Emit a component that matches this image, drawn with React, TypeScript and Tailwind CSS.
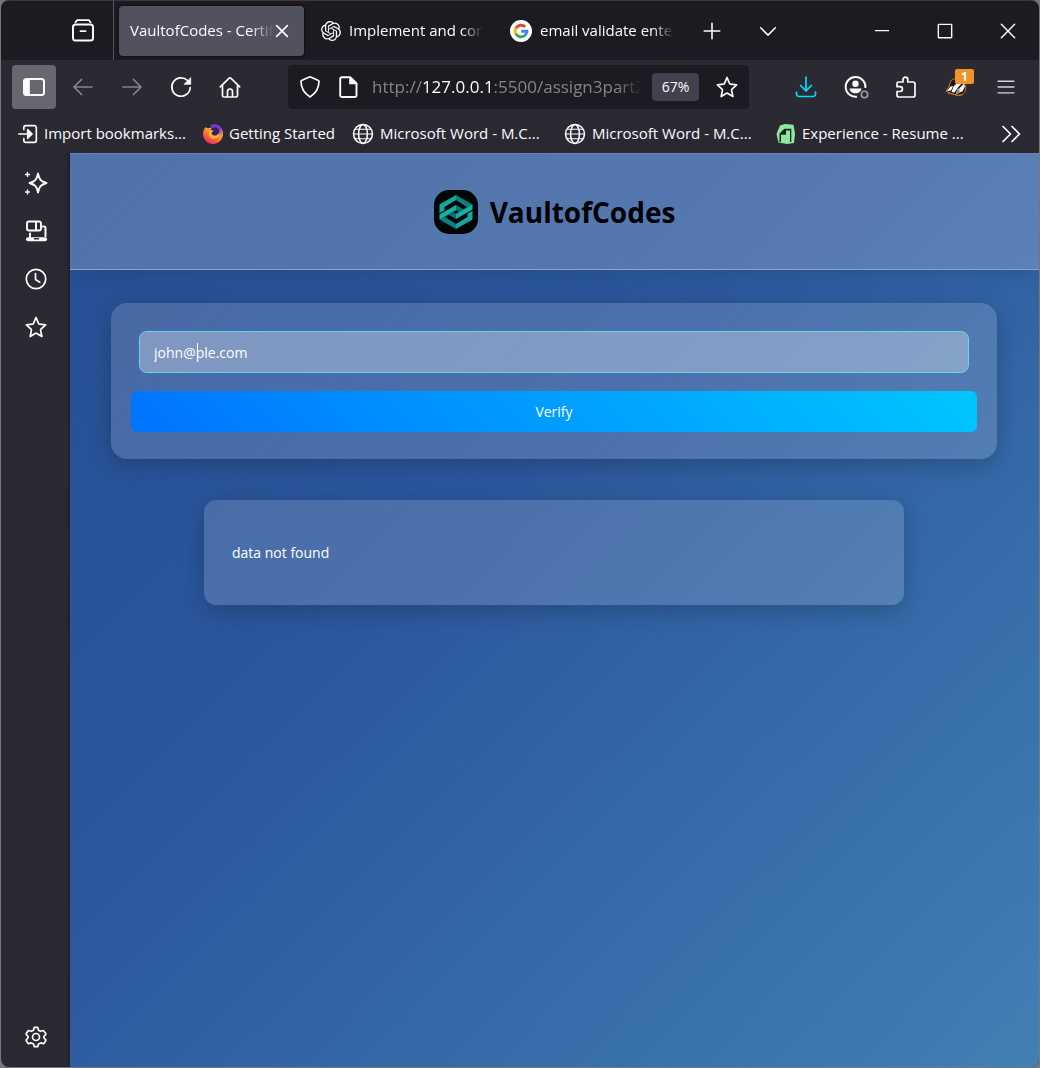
import type { ReactNode } from "react";
import { SiOpenai } from "react-icons/si";

type IconProps = { children: ReactNode; className?: string; size?: number };

function Icon({ children, className = "", size = 24 }: IconProps) {
  return (
    <svg
      width={size}
      height={size}
      viewBox="0 0 24 24"
      fill="none"
      stroke="currentColor"
      strokeWidth="1.7"
      strokeLinecap="round"
      strokeLinejoin="round"
      className={`shrink-0 ${className}`}
      aria-hidden="true"
    >
      {children}
    </svg>
  );
}

const starPath =
  "M12 2.5 14.5 8.4a1.4 1.4 0 0 0 1.1.8l6 .6-4.6 4.3a1.4 1.4 0 0 0-.4 1.3l1.3 6.1-5-3a1.6 1.6 0 0 0-1.7 0l-5 3 1.2-6.1a1.4 1.4 0 0 0-.4-1.3L2.4 9.8l6-.6a1.4 1.4 0 0 0 1.1-.8Z";

function ArchiveIcon() {
  return (
    <Icon>
      <path d="M4.5 3.2 6 1.2h12l1.5 2" strokeWidth="1.8" />
      <rect x="2" y="5.6" width="20" height="16" rx="2.5" strokeWidth="2" />
      <path d="M9.5 12.2h5" strokeWidth="1.8" />
    </Icon>
  );
}

function GoogleIcon() {
  return (
    <svg width="22" height="22" viewBox="0 0 22 22" className="shrink-0" aria-hidden="true">
      <circle cx="11" cy="11" r="11" fill="#fff" />
      <g fill="none" strokeWidth="2.9">
        <path d="M5.9 8.2A5.9 5.9 0 0 1 15.2 6.9" stroke="#ea4335" />
        <path d="M5.9 13.9A5.9 5.9 0 0 1 5.9 8.1" stroke="#fbbc04" />
        <path d="M14.8 15.5A5.9 5.9 0 0 1 5.9 13.9" stroke="#34a853" />
        <path d="M11.2 11.3h5.7A5.9 5.9 0 0 1 14.7 15.6" stroke="#4285f4" />
      </g>
    </svg>
  );
}

function FirefoxIcon() {
  return (
    <svg width="20" height="20" viewBox="0 0 20 20" className="shrink-0" aria-hidden="true">
      <defs>
        <linearGradient id="ff-body" x1="0.75" y1="0.1" x2="0.2" y2="0.95">
          <stop offset="0" stopColor="#ffd43a" />
          <stop offset="0.5" stopColor="#ff7a2c" />
          <stop offset="1" stopColor="#f52469" />
        </linearGradient>
        <linearGradient id="ff-tail" x1="0" y1="0" x2="1" y2="1">
          <stop offset="0" stopColor="#6a3ff2" />
          <stop offset="0.55" stopColor="#8d2be0" />
          <stop offset="1" stopColor="#ffb02e" />
        </linearGradient>
      </defs>
      <path d="M2.5 3.2C.8 5 0 7.500.1 10.200.3 15.700 4.600 20 10 20s9.900-4.300 9.900-9.700c0-3-1.200-5.800-3.400-7.700L9 3.500 5 4.300Z" fill="url(#ff-body)" />
      <path d="M7 1.500C10.500-.6 15-.1 17.600 3c2.300 2.500 2.800 6 1.800 9l-4-1-2-6Z" fill="url(#ff-tail)" />
      <circle cx="11.600" cy="8.200" r="4.900" fill="#30255f" />
      <path d="M6.500 6.300c1.600-.6 2.800-.4 4 .4L8.600 8.700c0 2 2 3.300 4.300 2.700 1.600-.5 2.600-1.800 3.600-3.500.3 4-2.100 6.600-5.500 6.800C7 14.900 4.800 10.500 6.500 6.300Z" fill="#ffb13a" />
    </svg>
  );
}

function GlobeIcon() {
  return (
    <Icon size={22}>
      <circle cx="12" cy="12" r="10.3" />
      <ellipse cx="12" cy="12" rx="4.8" ry="10.3" />
      <path d="M1.7 12h20.6M3.5 6.8h17M3.5 17.2h17" strokeWidth="1.3" />
    </Icon>
  );
}

function ResumeIcon() {
  return (
    <svg width="20" height="20" viewBox="0 0 20 20" className="shrink-0" aria-hidden="true">
      <path d="M4 1.5 9 0l8.500.8 1.500 9-1 9.200-7 1-8.500-1.500L.5 10Z" fill="#8fe8a0" />
      <path d="M3.500 9.500 8.300 4.700H15.300V18H14V6.500h-4v4.300H5V18H3.500Z" fill="#17251d" />
      <path d="m5 9.500 3.500-3.500v3.500Z" fill="#17251d" />
    </svg>
  );
}

function BadgerIcon() {
  return (
    <svg width="22" height="20" viewBox="0 0 22 20" className="shrink-0" aria-hidden="true">
      <path d="M1 14.500 4 9.500l2-6 6-3 6 4 3 5-1 5-3 3.500-4 .5-5-1.500Z" fill="#16120f" stroke="#d9701f" strokeWidth="1" />
      <path d="M1.800 14.200 5.500 9.500 8 9l-2 4.500Z" fill="#fff" />
      <path d="M6.500 15 8.500 9.500 13 5l4 1-4.500 5-3 4.500Z" fill="#fff" />
      <path d="m13 16 1.500-5L19 6.500l1 3-2.500 5Z" fill="#f1ede8" />
      <path d="m10.500 17.500 1.500-5.500 2-1 .5 3-1 3Z" fill="#8b8b8f" />
      <path d="m3 16 6 1.500 4 1 4-1" stroke="#d9701f" fill="none" />
    </svg>
  );
}

function VaultLogo() {
  return (
    <svg viewBox="0 0 44 44" className="size-11 shrink-0" role="img" aria-label="VaultofCodes logo">
      <rect width="44" height="44" rx="15" fill="#020606" />
      {[0, 180].map((angle) => (
        <g key={angle} transform={`rotate(${angle} 22 22)`}>
          <path d="M5.500 14.500 22 5v5L10.500 17v3.300l-5 2.900Z" fill="#10a99f" />
          <path d="M22 5 38.500 14.500 33.500 17.400 22 10Z" fill="#0b827c" />
          <path d="M5.500 24.500 22 15v5.200L5.500 29.700Z" fill="#12b0a6" />
          <path d="M22 15 30 19.500 25.500 22 22 20.200Z" fill="#0a736f" />
        </g>
      ))}
    </svg>
  );
}

function NavButton({ label, children, className = "" }: { label: string; children: ReactNode; className?: string }) {
  return (
    <button type="button" aria-label={label} className={`flex size-11 shrink-0 items-center justify-center rounded ${className}`}>
      {children}
    </button>
  );
}

function TabStrip() {
  return (
    <div className="flex h-[59px] items-center bg-[#1c1b22]">
      <div className="flex h-full w-[113px] shrink-0 items-center justify-end border-r border-[#55545c] pr-2">
        <NavButton label="Recent browsing">
          <ArchiveIcon />
        </NavButton>
      </div>
      <div role="tablist" aria-label="Open tabs" className="flex items-center pl-[5px]">
        <div role="tab" aria-selected="true" className="flex h-[50px] w-[185px] items-center rounded bg-[#52525e] pl-[11px] shadow-[0_0_3px_#000]">
          <span className="w-36 overflow-hidden whitespace-nowrap [mask-image:linear-gradient(to_right,#000_84%,transparent)]">
            VaultofCodes - Certif
          </span>
          <button type="button" aria-label="Close tab">
            <Icon size={16}>
              <path d="m4 4 16 16M20 4 4 20" strokeWidth="2.5" />
            </Icon>
          </button>
        </div>
        <div role="tab" aria-selected="false" className="flex w-[189px] items-center gap-2 pl-[17px]">
          <SiOpenai size={20} className="shrink-0" aria-hidden="true" />
          <span className="w-[134px] overflow-hidden whitespace-nowrap [mask-image:linear-gradient(to_right,#000_84%,transparent)]">
            Implement and con
          </span>
        </div>
        <div role="tab" aria-selected="false" className="flex w-[197px] items-center gap-2 pl-[17px]">
          <GoogleIcon />
          <span className="w-[134px] overflow-hidden whitespace-nowrap [mask-image:linear-gradient(to_right,#000_84%,transparent)]">
            email validate ente
          </span>
        </div>
      </div>
      <NavButton label="New tab">
        <Icon size={22}>
          <path d="M12 3.5v17M3.500 12h17" />
        </Icon>
      </NavButton>
      <NavButton label="List all tabs" className="ml-3">
        <Icon size={22}>
          <path d="m4 8.500 8 8 8-8" />
        </Icon>
      </NavButton>
      <div className="ml-auto flex">
        <button type="button" aria-label="Minimize" className="flex h-11 w-[63px] items-center justify-center">
          <Icon size={20}>
            <path d="M3.500 11.500h17" strokeLinecap="butt" />
          </Icon>
        </button>
        <button type="button" aria-label="Maximize" className="flex h-11 w-[63px] items-center justify-center">
          <Icon size={20}>
            <rect x="4" y="4" width="16" height="16" rx="0.5" />
          </Icon>
        </button>
        <button type="button" aria-label="Close" className="flex h-11 w-[63px] items-center justify-center">
          <Icon size={20}>
            <path d="m4 4 16 16M20 4 4 20" />
          </Icon>
        </button>
      </div>
    </div>
  );
}

function Toolbar() {
  return (
    <div className="flex h-[54px] items-center pr-[11px] pl-[11px]">
      <div className="flex gap-[5px]">
        <NavButton label="Sidebar" className="bg-[#686770]">
          <Icon>
            <rect x="2" y="4" width="20" height="16" rx="2.5" strokeWidth="2" />
            <path d="M3 5h4v14H3Z" fill="currentColor" />
          </Icon>
        </NavButton>
        <NavButton label="Back" className="text-[#85848b]">
          <Icon>
            <path d="M21 12H3M10.500 4.500 3 12l7.500 7.500" />
          </Icon>
        </NavButton>
        <NavButton label="Forward" className="text-[#85848b]">
          <Icon>
            <path d="M3 12h18M13.500 4.500 21 12l-7.500 7.500" />
          </Icon>
        </NavButton>
        <NavButton label="Reload">
          <Icon>
            <path d="M21.200 12.500A9.200 9.200 0 1 1 18.500 5.500l1.700 1.800" />
            <path d="M21.700 3v6.300h-6.300Z" fill="currentColor" strokeWidth="0.8" />
          </Icon>
        </NavButton>
        <NavButton label="Home">
          <Icon>
            <path d="m2.300 11.800 8.600-8.500a1.600 1.600 0 0 1 2.200 0l8.600 8.500M4.500 10v10.500a1.500 1.500 0 0 0 1.500 1.500h12a1.500 1.500 0 0 0 1.500-1.500V10M9.500 22v-5.500a2.500 2.500 0 0 1 5 0V22" />
          </Icon>
        </NavButton>
      </div>

      <div className="ml-9 flex h-11 min-w-0 flex-1 items-center rounded bg-[#1c1b22] pr-2.5 pl-2.5">
        <button type="button" aria-label="Tracking protection">
          <Icon>
            <path d="M12 1.800 4 5.200a1.500 1.500 0 0 0-1 1.400c.1 7 3.500 12 9 15.400 5.500-3.400 8.900-8.400 9-15.400a1.500 1.500 0 0 0-1-1.400Z" />
          </Icon>
        </button>
        <button type="button" aria-label="Site information" className="ml-3.5">
          <Icon>
            <path d="M6 2.300h8.500l6 6v11.900a1.800 1.800 0 0 1-1.800 1.800H6a1.800 1.800 0 0 1-1.800-1.800V4.100A1.800 1.800 0 0 1 6 2.300Z" strokeWidth="1.9" />
            <path d="M14 2.500v6h6.300Z" fill="currentColor" />
          </Icon>
        </button>
        <a
          href="#address"
          className="mr-2.5 ml-3 min-w-0 flex-1 overflow-hidden text-[17px] whitespace-nowrap text-[#85848b] [mask-image:linear-gradient(to_right,#000_91%,transparent)]"
        >
          http://<span className="text-[#fbfbfe]">127.0.0.1</span>:5500/assign3part2
        </a>
        <button type="button" className="h-7 w-[47px] shrink-0 rounded bg-[#42414d] text-sm">
          67%
        </button>
        <button type="button" aria-label="Bookmark this page" className="ml-4">
          <Icon>
            <path d={starPath} />
          </Icon>
        </button>
      </div>

      <div className="ml-[35px] flex shrink-0 gap-1.5">
        <NavButton label="Downloads" className="text-[#00ddff]">
          <Icon>
            <path d="M12 2v14M6.500 10.500 12 16l5.500-5.500M2.500 17v2a2.500 2.500 0 0 0 2.500 2.500h14a2.500 2.500 0 0 0 2.500-2.500v-2" />
          </Icon>
        </NavButton>
        <NavButton label="Account">
          <svg width="26" height="26" viewBox="0 0 26 26" fill="none" aria-hidden="true">
            <path d="M22.400 14A9.900 9.900 0 1 0 14 22.700" stroke="currentColor" strokeWidth="1.900" />
            <circle cx="12.500" cy="9.800" r="3.200" fill="currentColor" />
            <path d="M6.500 14.500h12c-.3 2.700-2.700 4.800-6 4.800s-5.700-2.100-6-4.800Z" fill="currentColor" />
            <circle cx="21.500" cy="20.500" r="3.200" stroke="#9b9aa0" strokeWidth="1.600" />
          </svg>
        </NavButton>
        <NavButton label="Extensions">
          <Icon>
            <path d="M4.500 7H9V4.500a2.400 2.400 0 0 1 4.800 0V7H19a2 2 0 0 1 2 2v11a2 2 0 0 1-2 2H5a2 2 0 0 1-2-2v-3.500h3a2.400 2.400 0 0 0 0-4.800H3V8.500A1.500 1.500 0 0 1 4.500 7Z" />
          </Icon>
        </NavButton>
        <NavButton label="Privacy Badger" className="relative">
          <BadgerIcon />
          <span className="absolute top-1 right-1 flex h-[15px] w-[19px] items-center justify-center rounded-xs bg-[#f0932b] text-xs leading-none font-bold">
            1
          </span>
        </NavButton>
        <NavButton label="Open application menu" className="text-[#d5d4d9]">
          <Icon size={20}>
            <path d="M2.500 5h19M2.500 12h19M2.500 19h19" />
          </Icon>
        </NavButton>
      </div>
    </div>
  );
}

function Bookmark({ icon, children, className = "" }: { icon: ReactNode; children: ReactNode; className?: string }) {
  return (
    <a href="#bookmark" className={`flex shrink-0 items-center gap-1.5 whitespace-nowrap ${className}`}>
      {icon}
      {children}
    </a>
  );
}

function BookmarksBar() {
  return (
    <nav aria-label="Bookmarks" className="flex h-[39px] items-center pr-4 pl-[17px]">
      <Bookmark
        className="w-[185px]"
        icon={
          <Icon size={20}>
            <path d="M7 6.500V4.300A2.300 2.300 0 0 1 9.300 2h10.400A2.300 2.300 0 0 1 22 4.300v15.400a2.300 2.300 0 0 1-2.300 2.300H9.300A2.300 2.300 0 0 1 7 19.700v-2.200M1 12h14" strokeWidth="2" />
            <path d="m11.500 6.500 5.500 5.500-5.500 5.500Z" fill="currentColor" />
          </Icon>
        }
      >
        Import bookmarks...
      </Bookmark>
      <Bookmark className="w-[149px]" icon={<FirefoxIcon />}>
        Getting Started
      </Bookmark>
      <Bookmark className="w-[212px]" icon={<GlobeIcon />}>
        Microsoft Word - M.C...
      </Bookmark>
      <Bookmark className="w-[212px]" icon={<GlobeIcon />}>
        Microsoft Word - M.C...
      </Bookmark>
      <Bookmark icon={<ResumeIcon />}>Experience - Resume ...</Bookmark>
      <button type="button" aria-label="Show more bookmarks" className="ml-auto">
        <Icon>
          <path d="m4 4.500 7.500 7.500L4 19.500M13 4.500l7.500 7.500-7.500 7.500" />
        </Icon>
      </button>
    </nav>
  );
}

function Sidebar() {
  return (
    <aside className="flex w-[69px] shrink-0 flex-col items-center gap-1 py-2 shadow-[inset_-2px_0_2px_#222129]">
      <NavButton label="AI chatbot">
        <Icon>
          <path d="M14 2.500c1.300 6 2.500 7.600 8.500 9.500-6 1.900-7.200 3.500-8.500 9.500C12.700 15.500 11.500 13.900 5.500 12 11.500 10.100 12.700 8.500 14 2.500Z" strokeWidth="1.900" />
          <path d="M3.500 1.500v4M1.500 3.500h4M3.500 19v4M1.500 21h4" strokeWidth="1.300" />
        </Icon>
      </NavButton>
      <NavButton label="Synced tabs">
        <Icon>
          <rect x="3" y="2.500" width="14" height="9" rx="2" strokeWidth="1.900" />
          <path d="M12 3v8M19 7.500h1a1.500 1.500 0 0 1 1.500 1.500v8.500M6 14.500v3.500" strokeWidth="2" />
          <path d="M4 20.300h17" strokeWidth="4" />
          <path d="M10.500 19.800h4" stroke="#2b2a33" strokeWidth="1.600" />
        </Icon>
      </NavButton>
      <NavButton label="History">
        <Icon>
          <circle cx="12" cy="12" r="9.700" />
          <path d="M11.500 6.500v6l4.300 2.700" />
        </Icon>
      </NavButton>
      <NavButton label="Bookmarks">
        <Icon>
          <path d={starPath} />
        </Icon>
      </NavButton>
      <NavButton label="Customize sidebar" className="mt-auto">
        <Icon>
          <path d="M10.300 2.300h3.400l.8 2.900 1.900 1.100 2.900-.8L21.500 8l.3 1.400-1.900 2.100v1.300l1.900 2.100-.3 1.400-1.900 2.400-2.900-.8-2.200 1.100-.8 2.700h-3.400l-.8-2.700-2.200-1.100-2.900.8-1.900-2.400-.3-1.400 1.900-2.100v-1.300L2.200 9.400 2.500 8l1.900-2.500 2.900.8 2.200-1.100Z" />
          <circle cx="12" cy="12" r="3.500" />
        </Icon>
      </NavButton>
    </aside>
  );
}

function Page() {
  return (
    <div className="flex-1 bg-linear-135 from-[#264f94] from-0% via-[#2c579d] via-40% to-[#4180b5] text-sm text-white">
      <header className="flex h-[117px] items-center justify-center gap-3 border-t border-b border-t-[#6583bd] border-b-[#8ba4cd] bg-white/20 shadow-[0_4px_20px_rgba(0,0,0,0.1)]">
        <VaultLogo />
        <h1 className="text-[28px] font-bold text-black">VaultofCodes</h1>
      </header>
      <main className="pt-[33px] pr-[42px] pl-[41px]">
        <form
          className="rounded-2xl bg-white/15 px-5 pt-7 pb-[27px] shadow-[0_6px_24px_rgba(0,0,0,0.22)]"
          onSubmit={(e) => e.preventDefault()}
        >
          <div className="relative px-2">
            <input
              type="email"
              aria-label="Email"
              defaultValue="john@ple.com"
              className="block h-[42px] w-full rounded-lg border border-[#6bd3ee] bg-white/30 px-3.5 outline-none"
            />
            <span aria-hidden="true" className="absolute top-3 left-[66px] h-[18px] w-px bg-white" />
          </div>
          <button type="submit" className="mt-[18px] block h-[41px] w-full rounded-md bg-linear-45 from-[#0072ff] to-[#00c6ff]">
            Verify
          </button>
        </form>
        <section className="mx-[93px] mt-[41px] rounded-xl bg-white/15 px-7 py-[42px] leading-[21px] shadow-[0_6px_24px_rgba(0,0,0,0.22)]">
          <p>data not found</p>
        </section>
      </main>
    </div>
  );
}

export default function App() {
  return (
    <div className="flex min-h-screen flex-col bg-[#78767b]">
      <div className="mx-px mb-px flex flex-1 flex-col overflow-hidden rounded-lg border-t border-[#43343c] bg-[#2b2a33] font-['Open_Sans','Noto_Sans',sans-serif] text-[15px] text-[#fbfbfe]">
        <TabStrip />
        <Toolbar />
        <BookmarksBar />
        <div className="flex flex-1">
          <Sidebar />
          <Page />
        </div>
      </div>
    </div>
  );
}
